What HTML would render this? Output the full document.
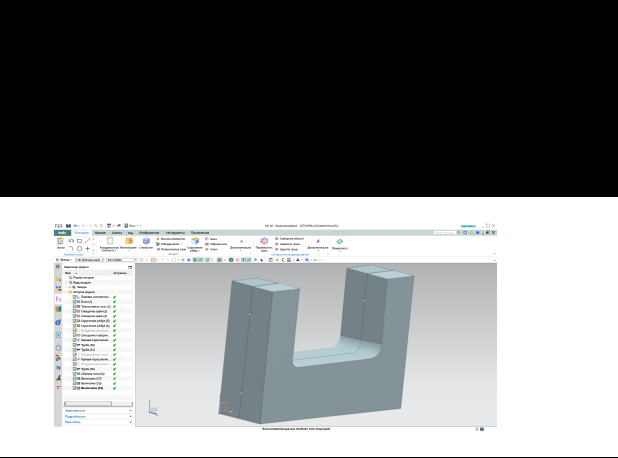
<!DOCTYPE html>
<html lang="ru"><head><meta charset="utf-8"><title>NX 10 - Моделирование</title>
<style>
html,body{margin:0;padding:0;background:#fff;overflow:hidden}
svg{display:block;font-family:"Liberation Sans",sans-serif;will-change:transform}
</style></head><body>
<svg width="618" height="458" viewBox="0 0 618 458">
<defs>
<linearGradient id="vg" x1="0" y1="0" x2="0" y2="1"><stop offset="0" stop-color="#b0b2b4"/><stop offset="0.745" stop-color="#e4e6e7"/><stop offset="0.84" stop-color="#e6e8e9"/><stop offset="1" stop-color="#e7e9ea"/></linearGradient>
<linearGradient id="gdark" gradientUnits="userSpaceOnUse" x1="230" y1="290" x2="262" y2="420"><stop offset="0" stop-color="#748186"/><stop offset="1" stop-color="#738085"/></linearGradient>
<linearGradient id="gdark2" gradientUnits="userSpaceOnUse" x1="346" y1="268" x2="380" y2="345"><stop offset="0" stop-color="#748186"/><stop offset="1" stop-color="#738085"/></linearGradient>
<linearGradient id="gfront" gradientUnits="userSpaceOnUse" x1="270" y1="300" x2="410" y2="400"><stop offset="0" stop-color="#849499"/><stop offset="1" stop-color="#829297"/></linearGradient>
<linearGradient id="gfil" gradientUnits="userSpaceOnUse" x1="350.4" y1="353.65" x2="354.2" y2="339.4"><stop offset="0" stop-color="#b8ced5"/><stop offset="0.4" stop-color="#b0c6cd"/><stop offset="0.75" stop-color="#9db2b9"/><stop offset="1" stop-color="#8b9fa5"/></linearGradient>
</defs>
<rect x="0.00" y="0.00" width="618.00" height="197.00" fill="#000" />
<rect x="0.00" y="457.00" width="618.00" height="1.00" fill="#000" />
<text x="54.90" y="227.84" transform="rotate(0.03 54.90 227.84)" font-size="5.4" fill="#56687a" stroke="#56687a" stroke-width="0.05" textLength="8.00" lengthAdjust="spacingAndGlyphs">NX</text>
<rect x="66.20" y="224.20" width="4.50" height="3.40" fill="#1c2a5a" />
<rect x="67.50" y="224.20" width="1.90" height="1.20" fill="#e8eef8" />
<rect x="67.70" y="226.40" width="1.50" height="1.20" fill="#c8d0e8" />
<path d="M74.3 226.4 q0.3 -2.0 2.2 -1.3 q1.0 0.7 0.3 1.9" fill="none" stroke="#3a70d0" stroke-width="0.8"/>
<polygon points="73.50,225.30 75.30,225.50 74.20,227.00" fill="#3a70d0" />
<polygon points="79.00,225.70 80.20,225.70 79.60,226.40" fill="#555" />
<path d="M85.0 226.4 q-0.3 -2.0 -2.2 -1.3 q-1.0 0.7 -0.3 1.9" fill="none" stroke="#b4c0d4" stroke-width="0.7"/>
<line x1="87.10" y1="223.50" x2="87.10" y2="228.00" stroke="#d0d0d0" stroke-width="0.3" />
<path d="M89.6 227.2 l2.2 -2.8 M92 227.2 l-2.2 -2.8" stroke="#d8ccaa" stroke-width="0.6" fill="none"/>
<rect x="94.60" y="224.30" width="2.00" height="2.40" fill="#c4c4c4" />
<rect x="95.50" y="225.10" width="2.00" height="2.40" fill="#dadada" />
<rect x="100.00" y="224.30" width="3.00" height="3.20" fill="#d2ccbc" />
<rect x="100.80" y="225.00" width="2.20" height="2.50" fill="#e8e8e8" />
<line x1="105.40" y1="223.50" x2="105.40" y2="228.00" stroke="#d0d0d0" stroke-width="0.3" />
<rect x="107.10" y="223.70" width="3.90" height="1.50" fill="#2f5fc0" />
<rect x="107.10" y="225.20" width="3.90" height="2.60" fill="#c8d4ee" />
<rect x="107.80" y="225.80" width="1.40" height="1.40" fill="#d03030" />
<polygon points="112.60,225.50 114.00,225.50 113.30,226.40" fill="#333" />
<line x1="115.30" y1="223.50" x2="115.30" y2="228.00" stroke="#d0d0d0" stroke-width="0.3" />
<rect x="116.90" y="225.00" width="2.00" height="1.80" fill="#e0a030" />
<rect x="118.30" y="224.20" width="2.20" height="2.00" fill="#4060c0" />
<line x1="122.70" y1="223.50" x2="122.70" y2="228.00" stroke="#d0d0d0" stroke-width="0.3" />
<rect x="124.60" y="223.60" width="3.30" height="4.00" fill="#3468c8" />
<rect x="125.40" y="224.30" width="1.80" height="1.80" fill="#f0d050" />
<text x="129.10" y="226.74" transform="rotate(0.03 129.10 226.74)" font-size="2.9" fill="#3a3a3a" stroke="#3a3a3a" stroke-width="0.05" textLength="6.50" lengthAdjust="spacingAndGlyphs">Окно</text>
<polygon points="136.60,225.40 138.00,225.40 137.30,226.30" fill="#333" />
<polygon points="139.80,225.00 140.80,225.80 139.80,226.60" fill="#333" />
<text x="264.90" y="226.74" transform="rotate(0.03 264.90 226.74)" font-size="2.9" fill="#2a2a2a" stroke="#2a2a2a" stroke-width="0.05" textLength="73.40" lengthAdjust="spacingAndGlyphs">NX 10 - Моделирование - [СТАНОК.prt (Изменённый) ]</text>
<text x="461.00" y="227.14" transform="rotate(0.03 461.00 227.14)" font-size="2.9" fill="#0a9a9c" stroke="#0a9a9c" stroke-width="0.1" font-weight="bold" textLength="14.60" lengthAdjust="spacingAndGlyphs">SIEMENS</text>
<line x1="482.20" y1="227.20" x2="483.60" y2="227.20" stroke="#777" stroke-width="0.45" />
<rect x="486.80" y="224.00" width="2.60" height="3.20" fill="none" stroke="#777" stroke-width="0.35"/>
<path d="M492.2 224.2 l2.5 3.0 M494.7 224.2 l-2.5 3.0" stroke="#666" stroke-width="0.45" fill="none"/>
<rect x="53.90" y="229.85" width="443.15" height="5.90" fill="#c6d7d3" />
<rect x="53.90" y="229.85" width="443.15" height="0.80" fill="#bfd3ce" />
<rect x="53.90" y="229.85" width="17.50" height="6.00" fill="#4d7f77" />
<text x="58.40" y="233.64" transform="rotate(0.03 58.40 233.64)" font-size="2.9" fill="#fff" stroke="#fff" stroke-width="0.1" font-weight="bold" textLength="7.80" lengthAdjust="spacingAndGlyphs">Файл</text>
<rect x="71.40" y="230.10" width="20.60" height="5.80" fill="#fff" />
<text x="74.60" y="233.64" transform="rotate(0.03 74.60 233.64)" font-size="2.9" fill="#3a7cc8" stroke="#3a7cc8" stroke-width="0.05" textLength="14.20" lengthAdjust="spacingAndGlyphs">Исходная</text>
<text x="94.90" y="233.64" transform="rotate(0.03 94.90 233.64)" font-size="2.9" fill="#222" stroke="#222" stroke-width="0.1" textLength="10.60" lengthAdjust="spacingAndGlyphs">Кривая</text>
<text x="112.00" y="233.64" transform="rotate(0.03 112.00 233.64)" font-size="2.9" fill="#222" stroke="#222" stroke-width="0.1" textLength="9.70" lengthAdjust="spacingAndGlyphs">Анализ</text>
<text x="128.20" y="233.64" transform="rotate(0.03 128.20 233.64)" font-size="2.9" fill="#222" stroke="#222" stroke-width="0.1" textLength="4.80" lengthAdjust="spacingAndGlyphs">Вид</text>
<text x="139.20" y="233.64" transform="rotate(0.03 139.20 233.64)" font-size="2.9" fill="#222" stroke="#222" stroke-width="0.1" textLength="20.10" lengthAdjust="spacingAndGlyphs">Отображение</text>
<text x="166.50" y="233.64" transform="rotate(0.03 166.50 233.64)" font-size="2.9" fill="#222" stroke="#222" stroke-width="0.1" textLength="18.10" lengthAdjust="spacingAndGlyphs">Инструменты</text>
<text x="191.10" y="233.64" transform="rotate(0.03 191.10 233.64)" font-size="2.9" fill="#222" stroke="#222" stroke-width="0.1" textLength="18.10" lengthAdjust="spacingAndGlyphs">Приложение</text>
<rect x="433.90" y="230.70" width="22.60" height="3.60" fill="#fff" stroke="#b8c8c4" stroke-width="0.25"/>
<text x="435.00" y="233.40" transform="rotate(0.03 435.00 233.40)" font-size="2.5" fill="#b4b4b4" textLength="18.50" lengthAdjust="spacingAndGlyphs">Поиск команды</text>
<circle cx="458.20" cy="232.20" r="1.00" fill="none" stroke="#777" stroke-width="0.4"/>
<line x1="458.90" y1="233.00" x2="459.80" y2="234.00" stroke="#777" stroke-width="0.45" />
<rect x="463.60" y="230.90" width="3.00" height="3.20" fill="#4a78c8" />
<rect x="464.30" y="231.60" width="1.60" height="1.80" fill="#e8d8c0" />
<path d="M470.0 233.8 l1.5 -2.6 l1.5 2.6 z" fill="#e4e4e4" stroke="#777" stroke-width="0.35"/>
<circle cx="477.60" cy="232.50" r="1.60" fill="#2e62d0" />
<circle cx="477.20" cy="232.10" r="0.60" fill="#9fc0f8" />
<line x1="482.00" y1="233.90" x2="483.80" y2="233.90" stroke="#333" stroke-width="0.55" />
<rect x="486.00" y="231.60" width="2.40" height="2.20" fill="#555" />
<rect x="487.00" y="230.90" width="2.40" height="2.20" fill="none" stroke="#555" stroke-width="0.4"/>
<path d="M492.1 231.0 l2.7 3.0 M494.8 231.0 l-2.7 3.0" stroke="#222" stroke-width="0.7" fill="none"/>
<polygon points="57.40,238.20 62.60,237.60 63.00,243.80 57.80,244.50" fill="#a5b1a7" stroke="#6f7d72" stroke-width="0.3"/>
<rect x="58.40" y="239.20" width="1.50" height="1.50" fill="#eef2ee" />
<rect x="60.40" y="239.00" width="1.50" height="1.50" fill="#e6ece6" />
<rect x="58.60" y="241.40" width="1.50" height="1.60" fill="#e6ece6" />
<rect x="60.60" y="241.30" width="1.60" height="1.70" fill="#f5f7f5" />
<polygon points="62.60,236.90 63.20,238.30 64.60,238.50 63.60,239.50 63.90,240.90 62.60,240.20 61.30,240.90 61.60,239.50 60.60,238.50 62.00,238.30" fill="#f5e467" />
<text x="57.10" y="248.57" transform="rotate(0.03 57.10 248.57)" font-size="2.7" fill="#2a2a2a" stroke="#2a2a2a" stroke-width="0.08" textLength="7.40" lengthAdjust="spacingAndGlyphs">Эскиз</text>
<rect x="67.50" y="237.00" width="25.20" height="15.50" fill="#fff" stroke="#d6d6d6" stroke-width="0.3"/>
<path d="M69.2 239.2 v2.9" fill="none" stroke="#d03030" stroke-width="0.6"/><path d="M69.2 242.1 h1.3 v-2.2 q0 -0.9 1.1 -0.9 q1.1 0 1.1 0.9 v2.2 h1.0" fill="none" stroke="#5a5a5a" stroke-width="0.5"/><path d="M73.7 242.1 v-2.7" fill="none" stroke="#d03030" stroke-width="0.55"/>
<rect x="77.60" y="239.30" width="3.90" height="2.90" fill="none" stroke="#444" stroke-width="0.45"/>
<circle cx="77.60" cy="239.30" r="0.50" fill="#da5e5e" />
<circle cx="81.50" cy="242.20" r="0.50" fill="#da5e5e" />
<line x1="85.20" y1="242.80" x2="89.60" y2="238.80" stroke="#d03030" stroke-width="0.55" />
<circle cx="85.20" cy="242.80" r="0.50" fill="#da5e5e" />
<circle cx="89.60" cy="238.80" r="0.50" fill="#da5e5e" />
<path d="M69.8 246.6 h1.4 q1.6 0 1.6 2.6 v0.8" fill="none" stroke="#555" stroke-width="0.5"/>
<circle cx="69.80" cy="246.60" r="0.55" fill="#da5e5e" />
<circle cx="72.80" cy="250.00" r="0.50" fill="#da5e5e" />
<circle cx="79.50" cy="248.60" r="2.30" fill="none" stroke="#444" stroke-width="0.5"/>
<line x1="85.50" y1="248.60" x2="89.70" y2="248.60" stroke="#333" stroke-width="0.5" />
<line x1="87.60" y1="246.50" x2="87.60" y2="250.70" stroke="#333" stroke-width="0.5" />
<polygon points="93.30,238.80 94.50,238.80 93.90,239.70" fill="#444" />
<polygon points="93.30,244.00 94.50,244.00 93.90,244.90" fill="#444" />
<polygon points="93.30,249.80 94.50,249.80 93.90,250.70" fill="#444" />
<polygon points="93.30,253.40 94.50,253.40 93.90,254.20" fill="#444" />
<text x="64.10" y="255.43" transform="rotate(0.03 64.10 255.43)" font-size="2.85" fill="#3a86c8" stroke="#3a86c8" stroke-width="0.03" textLength="18.60" lengthAdjust="spacingAndGlyphs">Прямой эскиз</text>
<line x1="96.60" y1="237.20" x2="96.60" y2="255.60" stroke="#e2e2e2" stroke-width="0.3" />
<polygon points="107.20,237.60 112.60,237.20 113.20,243.60 107.60,244.20" fill="#dde4dc" stroke="#8a968a" stroke-width="0.35"/>
<polygon points="108.40,239.00 111.80,238.80 112.20,242.80 108.80,243.00" fill="#f2f5f0" />
<text x="99.80" y="248.57" transform="rotate(0.03 99.80 248.57)" font-size="2.7" fill="#2a2a2a" stroke="#2a2a2a" stroke-width="0.08" textLength="18.80" lengthAdjust="spacingAndGlyphs">Координатная</text>
<text x="101.80" y="251.37" transform="rotate(0.03 101.80 251.37)" font-size="2.7" fill="#2a2a2a" stroke="#2a2a2a" stroke-width="0.08" textLength="12.20" lengthAdjust="spacingAndGlyphs">плоскость</text>
<polygon points="114.70,250.10 116.00,250.10 115.35,250.90" fill="#333" />
<rect x="125.60" y="237.60" width="6.80" height="6.20" fill="#f3b857" />
<rect x="126.80" y="238.40" width="1.60" height="5.40" fill="#fada8f" />
<rect x="129.20" y="238.40" width="1.40" height="5.40" fill="#e1964b" />
<rect x="131.00" y="239.40" width="1.60" height="3.20" fill="#ed7e7e" />
<text x="120.20" y="248.57" transform="rotate(0.03 120.20 248.57)" font-size="2.7" fill="#2a2a2a" stroke="#2a2a2a" stroke-width="0.08" textLength="16.20" lengthAdjust="spacingAndGlyphs">Вытягивание</text>
<polygon points="128.60,250.20 129.90,250.20 129.25,251.00" fill="#333" />
<polygon points="143.00,239.00 146.00,237.40 149.80,238.60 149.80,243.00 146.60,244.40 143.00,243.20" fill="#7ea1e7" />
<polygon points="143.00,239.00 146.00,237.40 149.80,238.60 146.60,240.20" fill="#bbd1f6" />
<circle cx="145.40" cy="241.60" r="1.20" fill="#f3b55e" />
<text x="139.60" y="248.57" transform="rotate(0.03 139.60 248.57)" font-size="2.7" fill="#2a2a2a" stroke="#2a2a2a" stroke-width="0.08" textLength="13.00" lengthAdjust="spacingAndGlyphs">Отверстие</text>
<text x="161.00" y="239.87" transform="rotate(0.03 161.00 239.87)" font-size="2.7" fill="#2a2a2a" stroke="#2a2a2a" stroke-width="0.08" textLength="23.90" lengthAdjust="spacingAndGlyphs">Массив элементов</text>
<text x="161.00" y="244.97" transform="rotate(0.03 161.00 244.97)" font-size="2.7" fill="#2a2a2a" stroke="#2a2a2a" stroke-width="0.08" textLength="18.00" lengthAdjust="spacingAndGlyphs">Объединение</text>
<text x="161.00" y="250.17" transform="rotate(0.03 161.00 250.17)" font-size="2.7" fill="#2a2a2a" stroke="#2a2a2a" stroke-width="0.08" textLength="25.20" lengthAdjust="spacingAndGlyphs">Тонкостенное тело</text>
<polygon points="155.90,239.30 157.80,238.60 159.80,239.30 157.80,240.40" fill="#eda85a" />
<polygon points="156.60,238.60 157.90,237.60 159.20,238.60 157.90,239.30" fill="#698fda" />
<polygon points="156.00,245.40 157.20,242.40 159.90,242.90 158.90,245.70" fill="#5d8f85" />
<rect x="155.90" y="242.00" width="1.20" height="1.10" fill="#e16a6a" />
<polygon points="155.90,249.20 158.60,247.70 158.60,250.70" fill="#e1965a" />
<rect x="158.30" y="248.20" width="1.50" height="2.00" fill="#7281d4" />
<polygon points="181.10,243.70 182.40,243.70 181.75,244.50" fill="#333" />
<text x="168.00" y="255.43" transform="rotate(0.03 168.00 255.43)" font-size="2.85" fill="#3a86c8" stroke="#3a86c8" stroke-width="0.03" textLength="10.40" lengthAdjust="spacingAndGlyphs">Элемент</text>
<polygon points="191.00,239.40 194.60,237.10 199.00,238.70 199.00,242.60 195.40,244.40 191.00,243.00" fill="#729ae7" />
<polygon points="191.00,239.40 194.60,237.10 199.00,238.70 195.40,240.70" fill="#f3e48b" />
<polygon points="191.00,239.40 195.40,240.70 195.40,244.40 191.00,243.00" fill="#e6edf8" />
<polygon points="192.20,239.30 196.40,238.30 197.20,238.80 193.20,239.90" fill="#e77e72" />
<text x="187.60" y="248.57" transform="rotate(0.03 187.60 248.57)" font-size="2.7" fill="#2a2a2a" stroke="#2a2a2a" stroke-width="0.08" textLength="14.90" lengthAdjust="spacingAndGlyphs">Скругление</text>
<text x="190.20" y="251.47" transform="rotate(0.03 190.20 251.47)" font-size="2.7" fill="#2a2a2a" stroke="#2a2a2a" stroke-width="0.08" textLength="7.40" lengthAdjust="spacingAndGlyphs">ребра</text>
<polygon points="198.60,250.20 199.90,250.20 199.25,251.00" fill="#333" />
<text x="210.20" y="239.57" transform="rotate(0.03 210.20 239.57)" font-size="2.7" fill="#2a2a2a" stroke="#2a2a2a" stroke-width="0.08" textLength="6.50" lengthAdjust="spacingAndGlyphs">Фаска</text>
<text x="210.20" y="244.97" transform="rotate(0.03 210.20 244.97)" font-size="2.7" fill="#2a2a2a" stroke="#2a2a2a" stroke-width="0.08" textLength="16.80" lengthAdjust="spacingAndGlyphs">Обрезка тела</text>
<text x="210.20" y="250.17" transform="rotate(0.03 210.20 250.17)" font-size="2.7" fill="#2a2a2a" stroke="#2a2a2a" stroke-width="0.08" textLength="7.20" lengthAdjust="spacingAndGlyphs">Уклон</text>
<polygon points="205.00,238.00 206.80,237.00 208.70,237.90 208.70,239.60 206.90,240.40 205.00,239.60" fill="#9bb8ed" />
<rect x="205.60" y="237.80" width="1.50" height="1.40" fill="#e78365" />
<rect x="206.90" y="238.60" width="1.30" height="1.20" fill="#f5f6fb" />
<rect x="205.00" y="242.60" width="3.70" height="3.10" fill="#efbb65" />
<rect x="205.00" y="243.60" width="1.60" height="1.40" fill="#e17065" />
<rect x="206.80" y="243.00" width="1.70" height="1.60" fill="#7286d4" />
<circle cx="206.90" cy="249.20" r="1.50" fill="#99a1e4" />
<rect x="206.20" y="248.60" width="1.60" height="1.00" fill="#e77e8b" />
<rect x="205.40" y="250.00" width="3.00" height="0.60" fill="#c8ceef" />
<polygon points="241.40,239.20 242.10,240.60 243.50,241.00 242.10,241.60 241.40,243.00 240.70,241.60 239.30,241.00 240.70,240.60" fill="#f3b55e" />
<rect x="240.90" y="241.20" width="1.60" height="1.40" fill="#7296e1" />
<text x="230.30" y="248.57" transform="rotate(0.03 230.30 248.57)" font-size="2.7" fill="#2a2a2a" stroke="#2a2a2a" stroke-width="0.08" textLength="20.70" lengthAdjust="spacingAndGlyphs">Дополнительно</text>
<polygon points="240.10,250.20 241.40,250.20 240.75,251.00" fill="#333" />
<polygon points="250.00,254.30 251.00,254.30 251.00,253.30" fill="#555" />
<line x1="253.00" y1="237.20" x2="253.00" y2="255.60" stroke="#e2e2e2" stroke-width="0.3" />
<polygon points="260.50,239.60 264.30,237.20 268.10,238.90 268.10,242.60 264.60,244.40 260.50,242.80" fill="#c18fe1" />
<polygon points="260.50,239.60 263.20,240.60 263.20,244.00 260.50,242.80" fill="#f3bb64" />
<polygon points="263.00,239.80 265.80,238.90 266.90,239.80 266.90,242.20 264.60,243.00 263.00,242.40" fill="#d5d7dd" />
<rect x="261.00" y="241.00" width="1.60" height="1.60" fill="#ef8bb5" />
<polygon points="262.60,238.30 264.30,237.20 266.00,238.00 264.40,238.90" fill="#ddb0ef" />
<text x="255.80" y="248.57" transform="rotate(0.03 255.80 248.57)" font-size="2.7" fill="#2a2a2a" stroke="#2a2a2a" stroke-width="0.08" textLength="16.90" lengthAdjust="spacingAndGlyphs">Переместить</text>
<text x="261.00" y="251.47" transform="rotate(0.03 261.00 251.47)" font-size="2.7" fill="#2a2a2a" stroke="#2a2a2a" stroke-width="0.08" textLength="6.50" lengthAdjust="spacingAndGlyphs">грань</text>
<polygon points="275.00,238.00 276.70,237.10 278.30,237.90 278.30,239.40 276.70,240.10 275.00,239.40" fill="#bb88df" />
<polygon points="275.00,238.40 276.70,239.00 276.70,240.10 275.00,239.40" fill="#f3b861" />
<rect x="276.30" y="238.10" width="1.20" height="1.10" fill="#e88397" />
<text x="280.00" y="239.57" transform="rotate(0.03 280.00 239.57)" font-size="2.7" fill="#2a2a2a" stroke="#2a2a2a" stroke-width="0.08" textLength="23.70" lengthAdjust="spacingAndGlyphs">Смещение области</text>
<polygon points="275.00,243.40 276.70,242.50 278.30,243.30 278.30,244.80 276.70,245.50 275.00,244.80" fill="#bb88df" />
<polygon points="275.00,243.80 276.70,244.40 276.70,245.50 275.00,244.80" fill="#f3b861" />
<rect x="276.30" y="243.50" width="1.20" height="1.10" fill="#e88397" />
<text x="280.00" y="244.97" transform="rotate(0.03 280.00 244.97)" font-size="2.7" fill="#2a2a2a" stroke="#2a2a2a" stroke-width="0.08" textLength="19.80" lengthAdjust="spacingAndGlyphs">Заменить грань</text>
<polygon points="275.00,248.60 276.70,247.70 278.30,248.50 278.30,250.00 276.70,250.70 275.00,250.00" fill="#bb88df" />
<polygon points="275.00,249.00 276.70,249.60 276.70,250.70 275.00,250.00" fill="#f3b861" />
<rect x="276.30" y="248.70" width="1.20" height="1.10" fill="#e88397" />
<text x="280.00" y="250.17" transform="rotate(0.03 280.00 250.17)" font-size="2.7" fill="#2a2a2a" stroke="#2a2a2a" stroke-width="0.08" textLength="17.90" lengthAdjust="spacingAndGlyphs">Удалить грань</text>
<path d="M316.4 242.4 l1.6 -1.6 l-1.2 -0.4 l2.8 -1.4 l-1.0 1.8 l1.6 0.2 l-2.8 1.8 z" fill="#a04ac8"/>
<text x="307.60" y="248.57" transform="rotate(0.03 307.60 248.57)" font-size="2.7" fill="#2a2a2a" stroke="#2a2a2a" stroke-width="0.08" textLength="20.70" lengthAdjust="spacingAndGlyphs">Дополнительно</text>
<polygon points="317.80,250.20 319.10,250.20 318.45,251.00" fill="#333" />
<text x="271.50" y="255.43" transform="rotate(0.03 271.50 255.43)" font-size="2.85" fill="#3a86c8" stroke="#3a86c8" stroke-width="0.03" textLength="37.40" lengthAdjust="spacingAndGlyphs">Синхронное моделирование</text>
<polygon points="327.30,254.30 328.30,254.30 328.30,253.30" fill="#555" />
<line x1="330.40" y1="237.20" x2="330.40" y2="255.60" stroke="#e2e2e2" stroke-width="0.3" />
<polygon points="336.20,241.40 340.60,238.80 343.40,241.60 339.20,244.60" fill="#72bb96" />
<polygon points="337.80,241.50 340.40,240.00 341.80,241.60 339.30,243.30" fill="#c8e7d4" />
<text x="331.90" y="249.27" transform="rotate(0.03 331.90 249.27)" font-size="2.7" fill="#2a2a2a" stroke="#2a2a2a" stroke-width="0.08" textLength="15.90" lengthAdjust="spacingAndGlyphs">Поверхность</text>
<polygon points="339.40,250.90 340.70,250.90 340.05,251.70" fill="#333" />
<line x1="350.00" y1="237.20" x2="350.00" y2="255.60" stroke="#e2e2e2" stroke-width="0.3" />
<polygon points="494.20,252.90 495.60,252.90 494.90,253.80" fill="#444" />
<line x1="53.90" y1="256.45" x2="497.05" y2="256.45" stroke="#dcdcdc" stroke-width="0.35" />
<rect x="56.40" y="258.40" width="2.60" height="2.80" fill="#96afdc" />
<line x1="56.60" y1="259.20" x2="58.80" y2="259.20" stroke="#fff" stroke-width="0.3" />
<line x1="56.60" y1="260.30" x2="58.80" y2="260.30" stroke="#fff" stroke-width="0.3" />
<rect x="56.40" y="258.40" width="0.80" height="2.80" fill="#5c7ec6" />
<text x="60.60" y="260.81" transform="rotate(0.03 60.60 260.81)" font-size="2.8" fill="#222" stroke="#222" stroke-width="0.1" textLength="9.00" lengthAdjust="spacingAndGlyphs">Меню</text>
<polygon points="70.60,259.50 71.90,259.50 71.25,260.30" fill="#333" />
<rect x="75.40" y="258.00" width="28.60" height="3.50" fill="#fff" stroke="#9c9c9c" stroke-width="0.4"/>
<text x="76.60" y="260.74" transform="rotate(0.03 76.60 260.74)" font-size="2.6" fill="#222" stroke="#222" stroke-width="0.08" textLength="23.90" lengthAdjust="spacingAndGlyphs">Нет фильтра выб.</text>
<polygon points="101.90,259.40 103.40,259.40 102.65,260.40" fill="#222" />
<rect x="106.70" y="258.10" width="30.50" height="3.50" fill="#fff" stroke="#9c9c9c" stroke-width="0.4"/>
<text x="108.10" y="260.74" transform="rotate(0.03 108.10 260.74)" font-size="2.6" fill="#222" stroke="#222" stroke-width="0.08" textLength="13.70" lengthAdjust="spacingAndGlyphs">Вся сборка</text>
<polygon points="134.40,259.40 135.90,259.40 135.15,260.40" fill="#222" />
<rect x="140.10" y="258.80" width="2.40" height="2.40" fill="#e2e2e2" stroke="#c4c4c4" stroke-width="0.4"/>
<rect x="140.70" y="258.20" width="2.40" height="2.40" fill="#ececec" stroke="#c4c4c4" stroke-width="0.4"/>
<path d="M146.2 258.8 l1.4 1 l-1.2 0.4 l1.6 1" stroke="#c0c0c0" stroke-width="0.45" fill="none"/>
<rect x="151.40" y="258.00" width="4.00" height="3.70" fill="#fff" stroke="#e05858" stroke-width="0.45"/>
<rect x="153.40" y="259.60" width="1.50" height="1.30" fill="#f2ce4c" />
<rect x="152.10" y="258.70" width="1.30" height="0.90" fill="#e37777" />
<polygon points="157.10,259.50 158.40,259.50 157.75,260.30" fill="#333" />
<path d="M161.0 258.8 h1.6 v1.6 M166.0 258.6 l2.4 1.2 v1.2" stroke="#c4c4c4" stroke-width="0.5" fill="none"/>
<rect x="171.90" y="258.20" width="3.60" height="3.10" fill="none" stroke="#8a8a8a" stroke-width="0.4" stroke-dasharray="0.8 0.5"/>
<polygon points="177.80,259.50 179.10,259.50 178.45,260.30" fill="#333" />
<circle cx="183.00" cy="259.80" r="1.50" fill="#96a2bf" />
<circle cx="183.00" cy="259.80" r="0.70" fill="#e2e8f5" />
<polygon points="187.20,259.00 188.80,258.20 190.40,259.00 190.40,260.60 188.80,261.40 187.20,260.60" fill="#4e7edc" />
<polygon points="187.20,259.00 188.80,258.20 190.40,259.00 188.80,259.80" fill="#a9c6f5" />
<rect x="192.50" y="257.50" width="11.30" height="4.60" fill="#a9d4ca" />
<rect x="205.00" y="257.50" width="5.20" height="4.60" fill="#a9d4ca" />
<rect x="216.70" y="257.50" width="5.80" height="4.60" fill="#a9d4ca" />
<rect x="228.40" y="257.50" width="5.50" height="4.60" fill="#a9d4ca" />
<rect x="240.70" y="257.50" width="10.80" height="4.60" fill="#a9d4ca" />
<circle cx="194.70" cy="259.80" r="1.20" fill="#4e964e" />
<line x1="194.70" y1="258.00" x2="194.70" y2="261.60" stroke="#222" stroke-width="0.4" />
<circle cx="194.70" cy="259.80" r="0.50" fill="#ead553" />
<line x1="199.20" y1="261.20" x2="201.80" y2="258.40" stroke="#333" stroke-width="0.45" />
<circle cx="201.80" cy="258.40" r="0.45" fill="#d54545" />
<line x1="206.40" y1="261.20" x2="209.00" y2="258.40" stroke="#c83030" stroke-width="0.5" />
<path d="M212.0 258.40000000000003 v1.6 q0 1.2 1.4 1.2" stroke="#c83030" stroke-width="0.5" fill="none"/>
<path d="M217.8 261.2 l1.2 -2.8 l0.8 2.0 l1.0 -1.4" stroke="#b02828" stroke-width="0.55" fill="none"/>
<line x1="217.60" y1="261.30" x2="221.60" y2="261.30" stroke="#3050c0" stroke-width="0.4" />
<path d="M223.8 260.6 q1.3 -2.4 2.6 0" stroke="#c83030" stroke-width="0.5" fill="none"/>
<circle cx="231.10" cy="259.80" r="1.50" fill="none" stroke="#222" stroke-width="0.6"/>
<line x1="229.20" y1="259.80" x2="233.00" y2="259.80" stroke="#222" stroke-width="0.35" />
<circle cx="237.40" cy="259.80" r="1.40" fill="none" stroke="#d03030" stroke-width="0.5"/>
<line x1="243.50" y1="261.40" x2="243.50" y2="258.20" stroke="#c03030" stroke-width="0.5" />
<circle cx="243.50" cy="259.60" r="0.50" fill="#333" />
<line x1="247.60" y1="261.30" x2="250.40" y2="258.30" stroke="#c03030" stroke-width="0.5" />
<circle cx="255.40" cy="259.60" r="1.30" fill="#5c8ddc" />
<circle cx="255.00" cy="259.30" r="0.50" fill="#d4e3fa" />
<polygon points="260.80,258.20 262.60,260.40 261.60,260.30 261.90,261.50 261.20,261.50 260.80,260.40" fill="#222" />
<rect x="262.00" y="259.60" width="0.90" height="1.60" fill="#d55353" />
<line x1="265.50" y1="257.60" x2="265.50" y2="262.00" stroke="#d4d4d4" stroke-width="0.3" />
<rect x="268.90" y="258.10" width="3.40" height="3.40" fill="#3f4e79" />
<rect x="269.40" y="258.90" width="2.40" height="2.20" fill="#e2eaf9" />
<rect x="268.90" y="258.10" width="3.40" height="0.80" fill="#4e79d5" />
<rect x="275.60" y="258.50" width="3.20" height="2.60" fill="#eadc9b" />
<rect x="276.20" y="259.10" width="2.00" height="0.50" fill="#aa8d45" />
<rect x="276.20" y="260.10" width="2.00" height="0.40" fill="#aa8d45" />
<path d="M284.2 258.3 q-2.2 0 -2.2 1.5 q0 1.5 2.2 1.5" stroke="#2a2a3a" stroke-width="0.6" fill="none"/>
<rect x="287.10" y="258.10" width="3.40" height="3.40" fill="#4e75d1" />
<rect x="287.10" y="258.90" width="3.40" height="1.20" fill="#eacece" />
<rect x="287.10" y="260.40" width="3.40" height="1.10" fill="#d55a5a" />
<polygon points="292.80,259.50 294.10,259.50 293.45,260.30" fill="#333" />
<path d="M296.2 261.0 h3.4 l-0.6 -1.2 h-2.2 z M297.3 259.8 v-1.4 h1.2 v1.4" fill="#444"/>
<polygon points="301.20,259.50 302.50,259.50 301.85,260.30" fill="#333" />
<rect x="305.40" y="258.40" width="2.40" height="2.40" fill="#4e79d5" />
<rect x="306.40" y="259.20" width="2.40" height="2.40" fill="#87aaea" />
<polygon points="310.20,259.50 311.50,259.50 310.85,260.30" fill="#333" />
<path d="M313.6 259.2 l0.9 1.6 l0.9 -1.6" stroke="#d04040" stroke-width="0.5" fill="none"/><path d="M315.6 259.2 l0.7 1.6 l0.7 -1.0" stroke="#3a9a3a" stroke-width="0.5" fill="none"/>
<polygon points="319.30,259.50 320.60,259.50 319.95,260.30" fill="#333" />
<line x1="323.20" y1="257.60" x2="323.20" y2="262.00" stroke="#d4d4d4" stroke-width="0.3" />
<polygon points="494.20,260.00 495.60,260.00 494.90,260.90" fill="#444" />
<line x1="53.90" y1="262.95" x2="497.05" y2="262.95" stroke="#a8a8a8" stroke-width="0.35" />
<rect x="53.90" y="263.00" width="8.50" height="163.90" fill="#d6d6d6" />
<rect x="54.70" y="293.50" width="7.70" height="10.70" fill="#fff" />
<line x1="54.70" y1="293.50" x2="62.40" y2="293.50" stroke="#bdbdbd" stroke-width="0.3" />
<rect x="62.40" y="263.00" width="72.70" height="163.90" fill="#fff" />
<text x="64.20" y="268.01" transform="rotate(0.03 64.20 268.01)" font-size="2.8" fill="#222" stroke="#222" stroke-width="0.1" textLength="24.30" lengthAdjust="spacingAndGlyphs">Навигатор модели</text>
<rect x="128.80" y="266.30" width="3.00" height="2.20" fill="none" stroke="#444" stroke-width="0.45"/>
<line x1="128.60" y1="266.50" x2="132.00" y2="266.50" stroke="#333" stroke-width="0.7" />
<rect x="62.40" y="270.00" width="70.40" height="5.20" fill="#f1f1f1" />
<line x1="62.40" y1="270.00" x2="132.80" y2="270.00" stroke="#dedede" stroke-width="0.3" />
<line x1="62.40" y1="275.20" x2="132.80" y2="275.20" stroke="#dedede" stroke-width="0.3" />
<line x1="111.90" y1="270.00" x2="111.90" y2="401.30" stroke="#e2e2e2" stroke-width="0.35" />
<text x="65.10" y="274.01" transform="rotate(0.03 65.10 274.01)" font-size="2.8" fill="#222" stroke="#222" stroke-width="0.1" textLength="5.30" lengthAdjust="spacingAndGlyphs">Имя</text>
<polygon points="75.30,273.70 77.10,273.70 76.20,272.40" fill="#444" />
<text x="113.60" y="274.01" transform="rotate(0.03 113.60 274.01)" font-size="2.8" fill="#222" stroke="#222" stroke-width="0.1" textLength="13.70" lengthAdjust="spacingAndGlyphs">Актуальн.</text>
<rect x="62.40" y="280.00" width="70.40" height="4.80" fill="#f7f7f7" />
<rect x="62.40" y="289.61" width="70.40" height="4.80" fill="#f7f7f7" />
<rect x="62.40" y="299.22" width="70.40" height="4.80" fill="#f7f7f7" />
<rect x="62.40" y="308.83" width="70.40" height="4.80" fill="#f7f7f7" />
<rect x="62.40" y="318.44" width="70.40" height="4.80" fill="#f7f7f7" />
<rect x="62.40" y="328.05" width="70.40" height="4.80" fill="#f7f7f7" />
<rect x="62.40" y="337.66" width="70.40" height="4.80" fill="#f7f7f7" />
<rect x="62.40" y="347.27" width="70.40" height="4.80" fill="#f7f7f7" />
<rect x="62.40" y="356.88" width="70.40" height="4.80" fill="#f7f7f7" />
<rect x="62.40" y="366.49" width="70.40" height="4.80" fill="#f7f7f7" />
<rect x="62.40" y="376.10" width="70.40" height="4.80" fill="#f7f7f7" />
<rect x="62.40" y="385.71" width="70.40" height="4.80" fill="#f7f7f7" />
<rect x="62.40" y="395.32" width="70.40" height="4.80" fill="#f7f7f7" />
<line x1="70.80" y1="276.60" x2="70.80" y2="293.52" stroke="#cfcfcf" stroke-width="0.25" stroke-dasharray="0.4 0.4"/>
<line x1="70.80" y1="294.82" x2="70.80" y2="388.62" stroke="#cfcfcf" stroke-width="0.25" stroke-dasharray="0.4 0.4"/>
<circle cx="70.30" cy="277.60" r="1.40" fill="#e4ebf2" stroke="#5a6a8a" stroke-width="0.4"/>
<line x1="70.30" y1="277.60" x2="70.30" y2="276.70" stroke="#334" stroke-width="0.3" />
<line x1="70.30" y1="277.60" x2="71.00" y2="277.60" stroke="#334" stroke-width="0.3" />
<rect x="71.00" y="277.80" width="1.40" height="1.30" fill="#8098c9" />
<text x="73.40" y="278.61" transform="rotate(0.03 73.40 278.61)" font-size="2.8" fill="#222" stroke="#222" stroke-width="0.1" textLength="20.50" lengthAdjust="spacingAndGlyphs">Режим истории</text>
<line x1="65.20" y1="282.41" x2="66.40" y2="282.41" stroke="#8a8a8a" stroke-width="0.3" />
<line x1="65.80" y1="281.81" x2="65.80" y2="283.01" stroke="#b0b0b0" stroke-width="0.25" />
<polygon points="69.00,280.91 72.20,281.21 71.60,283.91 69.40,283.61" fill="#58b57f" />
<rect x="69.80" y="281.81" width="1.20" height="1.10" fill="#b5e5c6" />
<rect x="71.30" y="282.81" width="1.00" height="1.00" fill="#de5d5d" />
<text x="73.40" y="283.41" transform="rotate(0.03 73.40 283.41)" font-size="2.8" fill="#222" stroke="#222" stroke-width="0.1" textLength="17.60" lengthAdjust="spacingAndGlyphs">Виды модели</text>
<line x1="65.20" y1="287.21" x2="66.40" y2="287.21" stroke="#8a8a8a" stroke-width="0.3" />
<line x1="65.80" y1="286.61" x2="65.80" y2="287.81" stroke="#b0b0b0" stroke-width="0.25" />
<path d="M68.6 287.21 l0.9 1.0 l1.7 -2.2" stroke="#28a828" stroke-width="0.7" fill="none"/>
<rect x="72.40" y="285.91" width="2.60" height="2.40" fill="#de5d5d" />
<rect x="73.40" y="286.81" width="2.00" height="1.60" fill="#6580d7" />
<text x="77.30" y="288.22" transform="rotate(0.03 77.30 288.22)" font-size="2.8" fill="#222" stroke="#222" stroke-width="0.1" textLength="9.40" lengthAdjust="spacingAndGlyphs">Камеры</text>
<line x1="65.20" y1="292.02" x2="66.40" y2="292.02" stroke="#8a8a8a" stroke-width="0.3" />
<polygon points="68.40,291.12 69.80,291.12 70.20,290.62 72.00,290.62 72.00,293.42 68.40,293.42" fill="#ebc34f" />
<rect x="68.40" y="292.22" width="3.60" height="1.20" fill="#f6da7f" />
<text x="73.40" y="293.02" transform="rotate(0.03 73.40 293.02)" font-size="2.8" fill="#222" stroke="#222" stroke-width="0.1" textLength="21.20" lengthAdjust="spacingAndGlyphs">История модели</text>
<rect x="73.10" y="295.32" width="3.00" height="3.00" fill="#fff" stroke="#4a4a4a" stroke-width="0.45"/>
<path d="M73.6 296.82 l0.9 0.9 l1.5 -2.0" stroke="#1c9c1c" stroke-width="0.85" fill="none"/>
<path d="M77.4 295.42 v2.6 h2.6" stroke="#444" stroke-width="0.4" fill="none"/>
<line x1="77.40" y1="298.02" x2="79.20" y2="296.22" stroke="#8a5ac8" stroke-width="0.4" />
<text x="81.20" y="297.83" transform="rotate(0.03 81.20 297.83)" font-size="2.8" fill="#222" stroke="#222" stroke-width="0.1" textLength="29.80" lengthAdjust="spacingAndGlyphs">Базовая система коо...</text>
<path d="M113.3 296.82 l0.9 1.0 l1.4 -2.1" stroke="#18a818" stroke-width="1.05" fill="none"/>
<rect x="73.10" y="300.12" width="3.00" height="3.00" fill="#fff" stroke="#4a4a4a" stroke-width="0.45"/>
<path d="M73.6 301.62 l0.9 0.9 l1.5 -2.0" stroke="#1c9c1c" stroke-width="0.85" fill="none"/>
<rect x="77.10" y="300.43" width="3.00" height="2.40" fill="#5884e5" />
<rect x="77.10" y="300.43" width="3.00" height="0.80" fill="#adc9f9" />
<text x="81.20" y="302.63" transform="rotate(0.03 81.20 302.63)" font-size="2.8" fill="#222" stroke="#222" stroke-width="0.1" textLength="10.80" lengthAdjust="spacingAndGlyphs">Блок (1)</text>
<path d="M113.3 301.62 l0.9 1.0 l1.4 -2.1" stroke="#18a818" stroke-width="1.05" fill="none"/>
<rect x="73.10" y="304.93" width="3.00" height="3.00" fill="#fff" stroke="#4a4a4a" stroke-width="0.45"/>
<path d="M73.6 306.43 l0.9 0.9 l1.5 -2.0" stroke="#1c9c1c" stroke-width="0.85" fill="none"/>
<rect x="77.10" y="305.13" width="3.00" height="2.60" fill="#d75656" />
<rect x="77.90" y="305.83" width="2.20" height="1.40" fill="#5873d7" />
<rect x="78.60" y="306.23" width="1.00" height="0.80" fill="#f2c95d" />
<text x="81.20" y="307.44" transform="rotate(0.03 81.20 307.44)" font-size="2.8" fill="#222" stroke="#222" stroke-width="0.1" textLength="29.30" lengthAdjust="spacingAndGlyphs">Тонкостенное тело (2)</text>
<path d="M113.3 306.43 l0.9 1.0 l1.4 -2.1" stroke="#18a818" stroke-width="1.05" fill="none"/>
<rect x="73.10" y="309.74" width="3.00" height="3.00" fill="#fff" stroke="#4a4a4a" stroke-width="0.45"/>
<path d="M73.6 311.24 l0.9 0.9 l1.5 -2.0" stroke="#1c9c1c" stroke-width="0.85" fill="none"/>
<rect x="77.10" y="309.94" width="3.00" height="2.60" fill="#8e73d7" />
<rect x="77.70" y="310.63" width="1.80" height="1.30" fill="#f2aeae" />
<text x="81.20" y="312.24" transform="rotate(0.03 81.20 312.24)" font-size="2.8" fill="#222" stroke="#222" stroke-width="0.1" textLength="25.80" lengthAdjust="spacingAndGlyphs">Смещение грани (3)</text>
<path d="M113.3 311.24 l0.9 1.0 l1.4 -2.1" stroke="#18a818" stroke-width="1.05" fill="none"/>
<rect x="73.10" y="314.54" width="3.00" height="3.00" fill="#fff" stroke="#4a4a4a" stroke-width="0.45"/>
<path d="M73.6 316.04 l0.9 0.9 l1.5 -2.0" stroke="#1c9c1c" stroke-width="0.85" fill="none"/>
<rect x="77.10" y="314.74" width="3.00" height="2.60" fill="#8e73d7" />
<rect x="77.70" y="315.44" width="1.80" height="1.30" fill="#f2aeae" />
<text x="81.20" y="317.05" transform="rotate(0.03 81.20 317.05)" font-size="2.8" fill="#222" stroke="#222" stroke-width="0.1" textLength="25.80" lengthAdjust="spacingAndGlyphs">Смещение грани (4)</text>
<path d="M113.3 316.04 l0.9 1.0 l1.4 -2.1" stroke="#18a818" stroke-width="1.05" fill="none"/>
<rect x="73.10" y="319.35" width="3.00" height="3.00" fill="#fff" stroke="#4a4a4a" stroke-width="0.45"/>
<path d="M73.6 320.85 l0.9 0.9 l1.5 -2.0" stroke="#1c9c1c" stroke-width="0.85" fill="none"/>
<rect x="77.10" y="319.55" width="3.00" height="2.60" fill="#5884e5" />
<rect x="77.10" y="319.55" width="1.80" height="1.30" fill="#f2bc4f" />
<rect x="78.30" y="320.85" width="1.40" height="1.10" fill="#e56a6a" />
<text x="81.20" y="321.85" transform="rotate(0.03 81.20 321.85)" font-size="2.8" fill="#222" stroke="#222" stroke-width="0.1" textLength="28.30" lengthAdjust="spacingAndGlyphs">Скругление ребра (5)</text>
<path d="M113.3 320.85 l0.9 1.0 l1.4 -2.1" stroke="#18a818" stroke-width="1.05" fill="none"/>
<rect x="73.10" y="324.15" width="3.00" height="3.00" fill="#fff" stroke="#4a4a4a" stroke-width="0.45"/>
<path d="M73.6 325.65 l0.9 0.9 l1.5 -2.0" stroke="#1c9c1c" stroke-width="0.85" fill="none"/>
<rect x="77.10" y="324.35" width="3.00" height="2.60" fill="#5884e5" />
<rect x="77.10" y="324.35" width="1.80" height="1.30" fill="#f2bc4f" />
<rect x="78.30" y="325.65" width="1.40" height="1.10" fill="#e56a6a" />
<text x="81.20" y="326.66" transform="rotate(0.03 81.20 326.66)" font-size="2.8" fill="#222" stroke="#222" stroke-width="0.1" textLength="28.30" lengthAdjust="spacingAndGlyphs">Скругление ребра (6)</text>
<path d="M113.3 325.65 l0.9 1.0 l1.4 -2.1" stroke="#18a818" stroke-width="1.05" fill="none"/>
<rect x="73.10" y="328.96" width="3.00" height="3.00" fill="#fff" stroke="#4a4a4a" stroke-width="0.45"/>
<path d="M73.6 330.46 l0.9 0.9 l1.5 -2.0" stroke="#1c9c1c" stroke-width="0.85" fill="none"/>
<rect x="77.30" y="329.16" width="2.40" height="2.60" fill="#fff" stroke="#8a8a8a" stroke-width="0.35" stroke-dasharray="0.6 0.4"/>
<text x="81.20" y="331.46" transform="rotate(0.03 81.20 331.46)" font-size="2.8" fill="#b4b4b4" stroke="#b4b4b4" stroke-width="0.1" textLength="29.30" lengthAdjust="spacingAndGlyphs">Координатная плоск...</text>
<path d="M113.3 330.46 l0.9 1.0 l1.4 -2.1" stroke="#18a818" stroke-width="1.05" fill="none"/>
<rect x="73.10" y="333.76" width="3.00" height="3.00" fill="#fff" stroke="#4a4a4a" stroke-width="0.45"/>
<path d="M73.6 335.26 l0.9 0.9 l1.5 -2.0" stroke="#1c9c1c" stroke-width="0.85" fill="none"/>
<rect x="77.10" y="334.16" width="3.00" height="2.20" fill="#658ee5" />
<rect x="77.80" y="335.06" width="2.30" height="1.30" fill="#f2bc4f" />
<text x="81.20" y="336.27" transform="rotate(0.03 81.20 336.27)" font-size="2.8" fill="#222" stroke="#222" stroke-width="0.1" textLength="28.80" lengthAdjust="spacingAndGlyphs">Смещение поверхн...</text>
<path d="M113.3 335.26 l0.9 1.0 l1.4 -2.1" stroke="#18a818" stroke-width="1.05" fill="none"/>
<rect x="73.10" y="338.56" width="3.00" height="3.00" fill="#fff" stroke="#4a4a4a" stroke-width="0.45"/>
<path d="M73.6 340.06 l0.9 0.9 l1.5 -2.0" stroke="#1c9c1c" stroke-width="0.85" fill="none"/>
<path d="M77.4 341.26 q0.4 -2.6 2.4 -2.2" stroke="#3a4a9a" stroke-width="0.5" fill="none"/>
<circle cx="78.60" cy="340.26" r="0.70" fill="#d76a6a" />
<text x="81.20" y="341.07" transform="rotate(0.03 81.20 341.07)" font-size="2.8" fill="#222" stroke="#222" stroke-width="0.1" textLength="29.30" lengthAdjust="spacingAndGlyphs">Кривая пересечени...</text>
<path d="M113.3 340.06 l0.9 1.0 l1.4 -2.1" stroke="#18a818" stroke-width="1.05" fill="none"/>
<rect x="73.10" y="343.37" width="3.00" height="3.00" fill="#fff" stroke="#4a4a4a" stroke-width="0.45"/>
<path d="M73.6 344.87 l0.9 0.9 l1.5 -2.0" stroke="#1c9c1c" stroke-width="0.85" fill="none"/>
<path d="M77.1 345.47 q1.5 -1.6 3.0 -0.4" stroke="#2038b0" stroke-width="1.25" fill="none"/>
<text x="81.20" y="345.88" transform="rotate(0.03 81.20 345.88)" font-size="2.8" fill="#222" stroke="#222" stroke-width="0.1" textLength="13.60" lengthAdjust="spacingAndGlyphs">Труба (10)</text>
<path d="M113.3 344.87 l0.9 1.0 l1.4 -2.1" stroke="#18a818" stroke-width="1.05" fill="none"/>
<rect x="73.10" y="348.18" width="3.00" height="3.00" fill="#fff" stroke="#4a4a4a" stroke-width="0.45"/>
<path d="M73.6 349.68 l0.9 0.9 l1.5 -2.0" stroke="#1c9c1c" stroke-width="0.85" fill="none"/>
<path d="M77.1 350.28 q1.5 -1.6 3.0 -0.4" stroke="#2038b0" stroke-width="1.25" fill="none"/>
<text x="81.20" y="350.68" transform="rotate(0.03 81.20 350.68)" font-size="2.8" fill="#222" stroke="#222" stroke-width="0.1" textLength="13.60" lengthAdjust="spacingAndGlyphs">Труба (11)</text>
<path d="M113.3 349.68 l0.9 1.0 l1.4 -2.1" stroke="#18a818" stroke-width="1.05" fill="none"/>
<rect x="73.10" y="352.98" width="3.00" height="3.00" fill="#fff" stroke="#4a4a4a" stroke-width="0.45"/>
<path d="M73.6 354.48 l0.9 0.9 l1.5 -2.0" stroke="#1c9c1c" stroke-width="0.85" fill="none"/>
<rect x="77.30" y="353.18" width="2.40" height="2.60" fill="#fff" stroke="#8a8a8a" stroke-width="0.35" stroke-dasharray="0.6 0.4"/>
<text x="81.20" y="355.49" transform="rotate(0.03 81.20 355.49)" font-size="2.8" fill="#b4b4b4" stroke="#b4b4b4" stroke-width="0.1" textLength="29.30" lengthAdjust="spacingAndGlyphs">Координатная плоск...</text>
<path d="M113.3 354.48 l0.9 1.0 l1.4 -2.1" stroke="#18a818" stroke-width="1.05" fill="none"/>
<rect x="73.10" y="357.79" width="3.00" height="3.00" fill="#fff" stroke="#4a4a4a" stroke-width="0.45"/>
<path d="M73.6 359.29 l0.9 0.9 l1.5 -2.0" stroke="#1c9c1c" stroke-width="0.85" fill="none"/>
<path d="M77.4 360.49 q0.4 -2.6 2.4 -2.2" stroke="#3a4a9a" stroke-width="0.5" fill="none"/>
<circle cx="78.60" cy="359.49" r="0.70" fill="#d76a6a" />
<text x="81.20" y="360.29" transform="rotate(0.03 81.20 360.29)" font-size="2.8" fill="#222" stroke="#222" stroke-width="0.1" textLength="29.30" lengthAdjust="spacingAndGlyphs">Кривая пересечени...</text>
<path d="M113.3 359.29 l0.9 1.0 l1.4 -2.1" stroke="#18a818" stroke-width="1.05" fill="none"/>
<rect x="73.10" y="362.59" width="3.00" height="3.00" fill="#fff" stroke="#4a4a4a" stroke-width="0.45"/>
<path d="M73.6 364.09 l0.9 0.9 l1.5 -2.0" stroke="#1c9c1c" stroke-width="0.85" fill="none"/>
<rect x="77.30" y="362.79" width="2.40" height="2.60" fill="#fff" stroke="#8a8a8a" stroke-width="0.35" stroke-dasharray="0.6 0.4"/>
<text x="81.20" y="365.10" transform="rotate(0.03 81.20 365.10)" font-size="2.8" fill="#b4b4b4" stroke="#b4b4b4" stroke-width="0.1" textLength="29.30" lengthAdjust="spacingAndGlyphs">Координатная плоск...</text>
<path d="M113.3 364.09 l0.9 1.0 l1.4 -2.1" stroke="#18a818" stroke-width="1.05" fill="none"/>
<rect x="73.10" y="367.39" width="3.00" height="3.00" fill="#fff" stroke="#4a4a4a" stroke-width="0.45"/>
<path d="M73.6 368.89 l0.9 0.9 l1.5 -2.0" stroke="#1c9c1c" stroke-width="0.85" fill="none"/>
<path d="M77.1 369.50 q1.5 -1.6 3.0 -0.4" stroke="#2038b0" stroke-width="1.25" fill="none"/>
<text x="81.20" y="369.90" transform="rotate(0.03 81.20 369.90)" font-size="2.8" fill="#222" stroke="#222" stroke-width="0.1" textLength="13.60" lengthAdjust="spacingAndGlyphs">Труба (15)</text>
<path d="M113.3 368.89 l0.9 1.0 l1.4 -2.1" stroke="#18a818" stroke-width="1.05" fill="none"/>
<rect x="73.10" y="372.20" width="3.00" height="3.00" fill="#fff" stroke="#4a4a4a" stroke-width="0.45"/>
<path d="M73.6 373.70 l0.9 0.9 l1.5 -2.0" stroke="#1c9c1c" stroke-width="0.85" fill="none"/>
<rect x="77.10" y="372.50" width="3.00" height="2.40" fill="#ebae4f" />
<rect x="77.10" y="373.50" width="3.00" height="0.90" fill="#7373d7" />
<rect x="78.80" y="372.50" width="1.30" height="1.00" fill="#e56a6a" />
<text x="81.20" y="374.71" transform="rotate(0.03 81.20 374.71)" font-size="2.8" fill="#222" stroke="#222" stroke-width="0.1" textLength="23.20" lengthAdjust="spacingAndGlyphs">Обрезка тела (16)</text>
<path d="M113.3 373.70 l0.9 1.0 l1.4 -2.1" stroke="#18a818" stroke-width="1.05" fill="none"/>
<rect x="73.10" y="377.00" width="3.00" height="3.00" fill="#fff" stroke="#4a4a4a" stroke-width="0.45"/>
<path d="M73.6 378.50 l0.9 0.9 l1.5 -2.0" stroke="#1c9c1c" stroke-width="0.85" fill="none"/>
<rect x="77.10" y="377.20" width="3.00" height="2.60" fill="#4a8073" />
<circle cx="78.00" cy="378.31" r="0.80" fill="#9cbcb5" />
<text x="81.20" y="379.51" transform="rotate(0.03 81.20 379.51)" font-size="2.8" fill="#222" stroke="#222" stroke-width="0.1" textLength="20.20" lengthAdjust="spacingAndGlyphs">Вычитание (17)</text>
<path d="M113.3 378.50 l0.9 1.0 l1.4 -2.1" stroke="#18a818" stroke-width="1.05" fill="none"/>
<rect x="73.10" y="381.81" width="3.00" height="3.00" fill="#fff" stroke="#4a4a4a" stroke-width="0.45"/>
<path d="M73.6 383.31 l0.9 0.9 l1.5 -2.0" stroke="#1c9c1c" stroke-width="0.85" fill="none"/>
<rect x="77.10" y="382.01" width="3.00" height="2.60" fill="#4a8073" />
<circle cx="78.00" cy="383.11" r="0.80" fill="#9cbcb5" />
<text x="81.20" y="384.32" transform="rotate(0.03 81.20 384.32)" font-size="2.8" fill="#222" stroke="#222" stroke-width="0.1" textLength="20.20" lengthAdjust="spacingAndGlyphs">Вычитание (18)</text>
<path d="M113.3 383.31 l0.9 1.0 l1.4 -2.1" stroke="#18a818" stroke-width="1.05" fill="none"/>
<rect x="73.10" y="386.62" width="3.00" height="3.00" fill="#fff" stroke="#4a4a4a" stroke-width="0.45"/>
<path d="M73.6 388.12 l0.9 0.9 l1.5 -2.0" stroke="#1c9c1c" stroke-width="0.85" fill="none"/>
<rect x="77.10" y="386.81" width="3.00" height="2.60" fill="#4a8073" />
<circle cx="78.00" cy="387.92" r="0.80" fill="#9cbcb5" />
<text x="81.20" y="389.12" transform="rotate(0.03 81.20 389.12)" font-size="2.8" fill="#111" stroke="#111" stroke-width="0.1" font-weight="bold" textLength="21.80" lengthAdjust="spacingAndGlyphs">Вычитание (19)</text>
<path d="M113.3 388.12 l0.9 1.0 l1.4 -2.1" stroke="#18a818" stroke-width="1.05" fill="none"/>
<rect x="64.20" y="401.50" width="68.80" height="4.50" fill="#f2f2f2" />
<rect x="65.60" y="401.80" width="46.00" height="3.90" fill="#ececec" stroke="#9a9a9a" stroke-width="0.3"/>
<polygon points="64.40,403.80 65.30,403.00 65.30,404.60" fill="#222" />
<polygon points="132.80,403.80 131.90,403.00 131.90,404.60" fill="#222" />
<line x1="64.50" y1="401.60" x2="64.50" y2="406.00" stroke="#555" stroke-width="0.3" />
<line x1="132.60" y1="401.60" x2="132.60" y2="406.00" stroke="#555" stroke-width="0.3" />
<line x1="63.00" y1="406.30" x2="133.00" y2="406.30" stroke="#6e6e6e" stroke-width="0.6" />
<line x1="111.60" y1="401.80" x2="111.60" y2="405.90" stroke="#555" stroke-width="0.35" />
<line x1="65.60" y1="401.80" x2="65.60" y2="405.90" stroke="#777" stroke-width="0.3" />
<text x="65.00" y="411.51" transform="rotate(0.03 65.00 411.51)" font-size="2.8" fill="#3a80c4" stroke="#3a80c4" stroke-width="0.1" textLength="19.90" lengthAdjust="spacingAndGlyphs">Зависимости</text>
<path d="M129.6 409.80 l1.0 1.3 l1.0 -1.3" stroke="#2f78c4" stroke-width="0.75" fill="none"/>
<text x="65.00" y="417.41" transform="rotate(0.03 65.00 417.41)" font-size="2.8" fill="#3a80c4" stroke="#3a80c4" stroke-width="0.1" textLength="20.50" lengthAdjust="spacingAndGlyphs">Подробности</text>
<path d="M129.6 415.70 l1.0 1.3 l1.0 -1.3" stroke="#2f78c4" stroke-width="0.75" fill="none"/>
<text x="65.00" y="423.01" transform="rotate(0.03 65.00 423.01)" font-size="2.8" fill="#3a80c4" stroke="#3a80c4" stroke-width="0.1" textLength="15.50" lengthAdjust="spacingAndGlyphs">Просмотр</text>
<path d="M129.6 421.30 l1.0 1.3 l1.0 -1.3" stroke="#2f78c4" stroke-width="0.75" fill="none"/>
<line x1="63.20" y1="407.70" x2="133.00" y2="407.70" stroke="#cfcfcf" stroke-width="0.35" />
<line x1="63.20" y1="413.60" x2="133.00" y2="413.60" stroke="#cfcfcf" stroke-width="0.35" />
<line x1="63.20" y1="419.30" x2="133.00" y2="419.30" stroke="#cfcfcf" stroke-width="0.35" />
<line x1="63.20" y1="424.90" x2="133.00" y2="424.90" stroke="#cfcfcf" stroke-width="0.35" />
<rect x="56.60" y="265.30" width="2.40" height="2.40" fill="#f0f0f0" stroke="#333" stroke-width="0.8" rx="0.5"/>
<rect x="56.20" y="276.70" width="1.60" height="4.40" fill="#f0c030" />
<rect x="57.80" y="278.50" width="3.20" height="1.20" fill="#f0c030" />
<rect x="59.20" y="279.30" width="1.60" height="1.80" fill="#4a78d8" />
<rect x="56.20" y="286.40" width="1.60" height="1.80" fill="#3a5ad0" />
<rect x="59.00" y="286.40" width="1.60" height="1.80" fill="#3a5ad0" />
<rect x="56.20" y="288.40" width="2.60" height="1.60" fill="#f0c030" />
<rect x="58.60" y="289.00" width="2.60" height="1.80" fill="#d03838" />
<path d="M56.6 296.6 v5.2 M56.6 299.2 h3.6 M58.6 301.2 h2.2" stroke="#c050c0" stroke-width="0.6" fill="none"/>
<circle cx="57.00" cy="297.20" r="0.70" fill="#e060a0" />
<circle cx="60.40" cy="299.20" r="0.60" fill="#8a50d0" />
<rect x="55.60" y="307.20" width="1.80" height="4.40" fill="#f08a20" />
<rect x="57.40" y="306.80" width="1.80" height="4.80" fill="#30b040" />
<rect x="59.20" y="306.20" width="1.90" height="5.40" fill="#2a6ae0" />
<rect x="55.60" y="306.60" width="1.80" height="0.90" fill="#e05030" />
<circle cx="59.70" cy="320.50" r="1.20" fill="#4a7ad8" />
<circle cx="57.80" cy="322.80" r="2.50" fill="#2a62c8" />
<rect x="57.40" y="322.20" width="0.90" height="2.30" fill="#fff" />
<circle cx="57.90" cy="321.30" r="0.50" fill="#fff" />
<rect x="56.00" y="332.10" width="4.60" height="5.80" fill="#a9c4ea" stroke="#6a92d0" stroke-width="0.35"/>
<circle cx="58.30" cy="335.10" r="1.50" fill="#e8f2ea" />
<circle cx="58.30" cy="335.10" r="1.00" fill="#38a858" />
<circle cx="58.40" cy="347.90" r="2.40" fill="#d4dcec" stroke="#6a7080" stroke-width="0.65"/>
<circle cx="58.40" cy="347.90" r="1.20" fill="#f4f6fa" />
<line x1="58.60" y1="347.90" x2="58.60" y2="346.60" stroke="#333" stroke-width="0.35" />
<line x1="58.60" y1="347.90" x2="59.50" y2="347.90" stroke="#333" stroke-width="0.35" />
<rect x="55.80" y="354.80" width="2.40" height="1.60" fill="#e03030" />
<rect x="55.80" y="356.40" width="2.40" height="1.50" fill="#f0d020" />
<rect x="55.80" y="357.90" width="2.40" height="1.50" fill="#30b040" />
<rect x="55.80" y="359.40" width="2.40" height="1.40" fill="#3060e0" />
<polygon points="58.40,355.80 60.60,359.60 59.40,359.80 58.40,357.60" fill="#222" />
<text x="56.60" y="369.40" transform="rotate(0.03 56.60 369.40)" font-size="5.0" fill="#2a62c8" stroke="#2a62c8" stroke-width="0.1" font-weight="bold" textLength="4.20" lengthAdjust="spacingAndGlyphs">N</text>
<polygon points="56.20,380.20 60.80,380.20 60.20,378.60 59.60,378.40 60.60,375.40 59.20,375.00 58.00,378.40 57.00,378.60" fill="#4a4a52" />
<rect x="55.80" y="379.60" width="2.20" height="0.90" fill="#e09030" />
<rect x="56.40" y="386.20" width="4.40" height="3.60" fill="#f4e8e8" />
<rect x="56.40" y="386.20" width="4.40" height="0.80" fill="#d04040" />
<rect x="57.00" y="387.60" width="1.40" height="1.60" fill="#3a6ad0" />
<rect x="58.80" y="387.60" width="1.40" height="1.60" fill="#f0b030" />
<rect x="135.10" y="263.00" width="361.95" height="163.90" fill="url(#vg)"/>
<rect x="135.10" y="263.00" width="361.95" height="1.00" fill="#a3a6a9" />
<rect x="135.10" y="425.90" width="361.95" height="1.00" fill="#cdcfd0" />
<rect x="135.10" y="263.00" width="0.90" height="163.90" fill="#a9acae" opacity="0.35"/>
<polygon points="346.80,268.15 387.40,278.90 382.00,344.20 340.50,335.70" fill="#748186" stroke="#57666b" stroke-width="0.3" stroke-linejoin="round"/>
<polygon points="293.60,352.50 330.40,348.30 370.40,358.80 299.50,367.30 291.50,362.00" fill="#b8ced5"/>
<line x1="293.60" y1="352.50" x2="330.40" y2="348.30" stroke="#8c9da3" stroke-width="0.3" />
<path d="M330.4 348.3 Q339.0 345.6 340.5 335.7 L382.0 344.2 Q380.6 356.2 370.4 358.8 Z" fill="url(#gfil)"/>
<path d="M272.5 291.7 L299.6 288.7 L292.6 359.8 Q291.9 367.6 299.5 367.2 L370.4 358.8 Q380.4 356.6 381.8 345.0 L387.4 278.9 L414.0 276.0 L400.8 408.4 L260.0 424.0 Z" fill="url(#gfront)" stroke="#57666b" stroke-width="0.3" stroke-linejoin="round"/>
<polygon points="232.10,281.00 272.50,291.70 260.00,424.00 218.70,413.50" fill="#748186" stroke="#57666b" stroke-width="0.3" stroke-linejoin="round"/>
<polygon points="232.10,281.00 257.50,278.00 299.60,288.70 272.50,291.70" fill="#b0c6ce" stroke="#57666b" stroke-width="0.3" stroke-linejoin="round"/>
<polygon points="346.80,268.15 371.50,265.00 414.00,276.00 387.40,278.90" fill="#b0c6ce" stroke="#57666b" stroke-width="0.3" stroke-linejoin="round"/>
<polygon points="252.80,286.60 278.60,283.30 299.60,288.70 272.50,291.70" fill="#bacfd6"/>
<polygon points="367.30,273.60 392.90,270.40 414.00,276.00 387.40,278.90" fill="#bacfd6"/>
<line x1="252.80" y1="286.60" x2="278.60" y2="283.30" stroke="#4e5d62" stroke-width="0.4" />
<line x1="367.30" y1="273.60" x2="392.90" y2="270.40" stroke="#4e5d62" stroke-width="0.4" />
<line x1="252.80" y1="286.60" x2="239.10" y2="418.70" stroke="#4e5a5e" stroke-width="0.4" />
<line x1="367.30" y1="273.60" x2="360.90" y2="339.90" stroke="#4e5a5e" stroke-width="0.4" />
<path d="M360.9 339.9 Q359.6 351.4 353.5 353.1 L293.2 360.0" fill="none" stroke="#65767b" stroke-width="0.3"/>
<line x1="272.50" y1="291.70" x2="260.00" y2="424.00" stroke="#57666b" stroke-width="0.35" />
<line x1="232.10" y1="281.00" x2="272.50" y2="291.70" stroke="#66757a" stroke-width="0.3" />
<line x1="272.50" y1="291.70" x2="299.60" y2="288.70" stroke="#6f7f84" stroke-width="0.3" />
<line x1="387.40" y1="278.90" x2="414.00" y2="276.00" stroke="#6f7f84" stroke-width="0.3" />
<line x1="346.80" y1="268.15" x2="387.40" y2="278.90" stroke="#66757a" stroke-width="0.3" />
<line x1="330.40" y1="348.30" x2="370.40" y2="358.80" stroke="#8a9fa5" stroke-width="0.3" />
<line x1="340.50" y1="335.70" x2="382.00" y2="344.20" stroke="#5a6a6f" stroke-width="0.35" />
<circle cx="250.10" cy="313.30" r="1.35" fill="#414c52" />
<circle cx="250.00" cy="313.75" r="1.00" fill="#dde5ea" />
<circle cx="250.45" cy="313.75" r="0.62" fill="#2a78e0" />
<circle cx="241.60" cy="392.00" r="1.35" fill="#414c52" />
<circle cx="241.50" cy="392.45" r="1.00" fill="#dde5ea" />
<circle cx="241.95" cy="392.45" r="0.62" fill="#2a78e0" />
<circle cx="364.80" cy="299.70" r="1.35" fill="#414c52" />
<circle cx="364.70" cy="300.15" r="1.00" fill="#dde5ea" />
<circle cx="365.15" cy="300.15" r="0.62" fill="#2a78e0" />
<path d="M220.0 403.2 h6.2 v9.6 M220.0 403.2 v9.8" fill="none" stroke="#c8cdd0" stroke-width="0.35"/>
<path d="M220.6 404.6 h6.2 M226.6 404.6 v8.6 M219.0 413.4 h8" fill="none" stroke="#b04848" stroke-width="0.3"/>
<path d="M220.3 395.4 v2.6 M219.2 413.6 l-1.0 0.6" fill="none" stroke="#c03838" stroke-width="0.5"/>
<line x1="228.60" y1="411.80" x2="232.40" y2="411.80" stroke="#e8ecee" stroke-width="0.5" />
<line x1="149.50" y1="401.60" x2="149.50" y2="411.20" stroke="#2a8a38" stroke-width="0.6" stroke-dasharray="1.1 0.35"/>
<rect x="150.60" y="407.00" width="6.60" height="4.60" fill="#c9cbcd" />
<rect x="150.60" y="407.00" width="6.60" height="1.00" fill="#d8dadc" />
<line x1="153.60" y1="407.20" x2="153.60" y2="411.60" stroke="#dcdedf" stroke-width="0.4" />
<line x1="148.80" y1="412.00" x2="157.00" y2="414.20" stroke="#1e46d0" stroke-width="0.9" />
<line x1="150.80" y1="412.20" x2="156.00" y2="412.60" stroke="#e8c890" stroke-width="0.4" />
<rect x="156.60" y="415.00" width="1.20" height="0.70" fill="#3a70e0" />
<text x="149.20" y="401.65" transform="rotate(0.03 149.20 401.65)" font-size="1.8" fill="#2e8a3a" stroke="#2e8a3a" stroke-width="0.1" textLength="1.40" lengthAdjust="spacingAndGlyphs">Y</text>
<text x="262.60" y="429.67" transform="rotate(0.03 262.60 429.67)" font-size="2.7" fill="#2a2a2a" stroke="#2a2a2a" stroke-width="0.12" textLength="67.50" lengthAdjust="spacingAndGlyphs">Восстановление данных пробного тела операцией</text>
<rect x="475.60" y="427.60" width="2.90" height="3.10" fill="#b4b4b4" />
<line x1="476.00" y1="428.60" x2="478.20" y2="428.60" stroke="#f4f4f4" stroke-width="0.3" />
<line x1="476.00" y1="429.60" x2="478.20" y2="429.60" stroke="#f4f4f4" stroke-width="0.3" />
<rect x="480.20" y="427.60" width="3.40" height="3.10" fill="#3a3f4a" />
<rect x="480.70" y="428.10" width="2.40" height="1.50" fill="#4a88e0" />
</svg>
</body></html>
